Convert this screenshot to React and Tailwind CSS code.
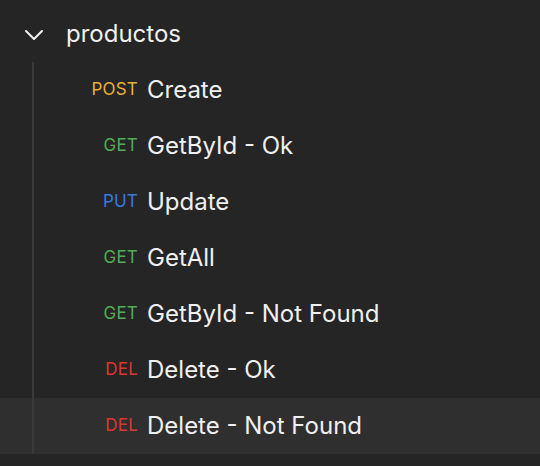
import React from "react";

const requests = [
  { method: "POST", name: "Create", color: "text-[#e5b13a]" },
  { method: "GET", name: "GetById - Ok", color: "text-[#4fae52]" },
  { method: "PUT", name: "Update", color: "text-[#3b78e0]" },
  { method: "GET", name: "GetAll", color: "text-[#4fae52]" },
  { method: "GET", name: "GetById - Not Found", color: "text-[#4fae52]" },
  { method: "DEL", name: "Delete - Ok", color: "text-[#d9392f]" },
  { method: "DEL", name: "Delete - Not Found", color: "text-[#d9392f]", active: true },
];

const App = () => {
  return (
    <div
      className="w-[540px] h-[466px] bg-[#252525] text-[#f0f0f0] overflow-hidden pt-[6px]"
      style={{ fontFamily: "Inter, 'Noto Sans', sans-serif" }}
    >
      {/* Folder header */}
      <div className="flex items-center h-[56px] pl-[25px]">
        <svg width="18" height="10" viewBox="0 0 18 10" fill="none" className="mt-[1px]">
          <path d="M1 1l8 8 8-8" stroke="#f0f0f0" strokeWidth="2" strokeLinecap="round" strokeLinejoin="round" />
        </svg>
        <span className="ml-[23px] text-[24px] leading-none">productos</span>
      </div>

      {/* Requests */}
      <div className="relative">
        <div className="absolute left-[32px] top-0 bottom-0 w-[2px] bg-[#3a3a3a]" />
        {requests.map((req, i) => (
          <div
            key={i}
            className={`flex items-center h-[56px] ${req.active ? "bg-[#2f2f2f]" : ""}`}
          >
            <span className={`w-[138px] text-right text-[17px] tracking-[0.2px] ${req.color}`}>
              {req.method}
            </span>
            <span className="ml-[9px] text-[24px] leading-none">{req.name}</span>
          </div>
        ))}
      </div>
    </div>
  );
};

export default App;
